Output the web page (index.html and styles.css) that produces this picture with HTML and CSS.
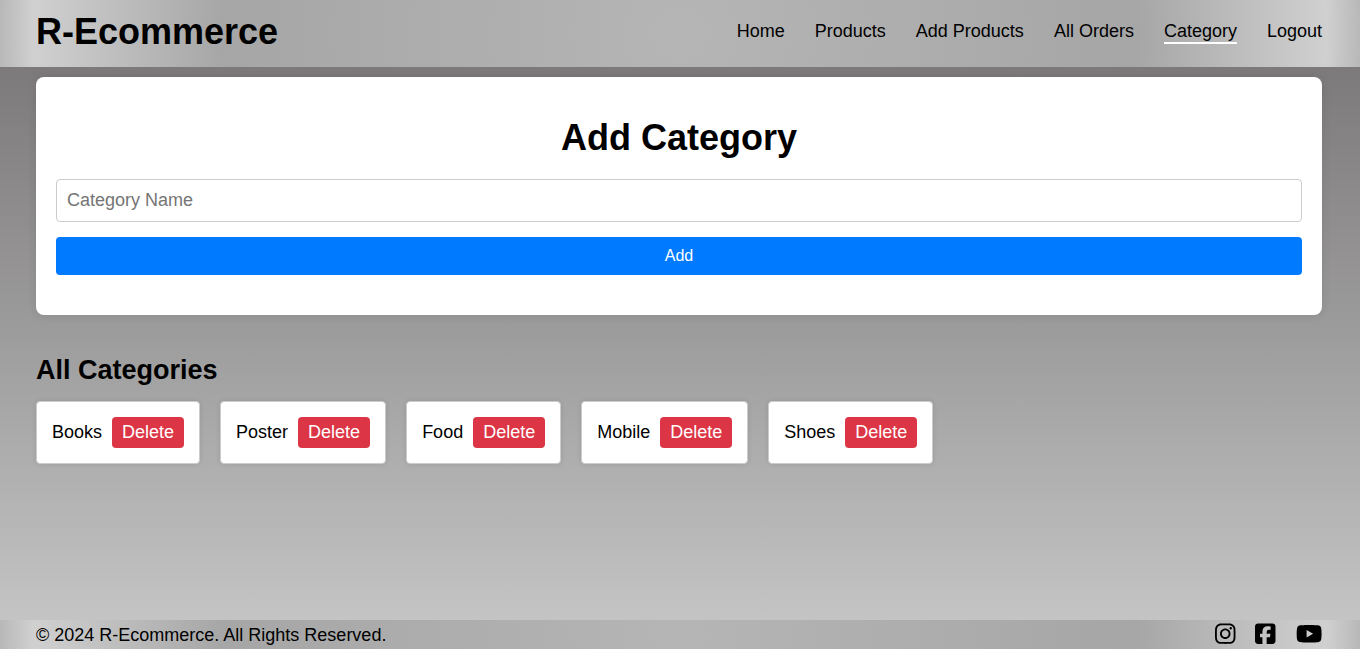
FILE: index.html
```html
<!DOCTYPE html>
<html lang="en">
<head>
<meta charset="utf-8">
<title>R-Ecommerce</title>
<link rel="stylesheet" href="styles.css">
</head>
<body>
<header class="header">
  <div class="logo">R-Ecommerce</div>
  <nav class="nav">
    <a class="nav-link">Home</a>
    <a class="nav-link">Products</a>
    <a class="nav-link">Add Products</a>
    <a class="nav-link">All Orders</a>
    <a class="nav-link active">Category</a>
    <a class="nav-link">Logout</a>
  </nav>
</header>
<main class="main">
  <section class="card">
    <h1 class="title">Add Category</h1>
    <form class="form">
      <input class="input" type="text" placeholder="Category Name">
      <button class="add" type="button">Add</button>
    </form>
  </section>
  <h2 class="subtitle">All Categories</h2>
  <ul class="list">
    <li class="item"><span>Books</span><button class="delete">Delete</button></li>
    <li class="item"><span>Poster</span><button class="delete">Delete</button></li>
    <li class="item"><span>Food</span><button class="delete">Delete</button></li>
    <li class="item"><span>Mobile</span><button class="delete">Delete</button></li>
    <li class="item"><span>Shoes</span><button class="delete">Delete</button></li>
  </ul>
</main>
<footer class="footer">
  <p class="copy">© 2024 R-Ecommerce. All Rights Reserved.</p>
  <div class="social">
    <svg class="icon" viewBox="0 0 448 512"><path d="M224.100 141c-63.600 0-114.900 51.300-114.900 114.900s51.300 114.900 114.900 114.900S339 319.500 339 255.900 287.700 141 224.100 141zm0 189.600c-41.100 0-74.700-33.500-74.700-74.700s33.500-74.700 74.700-74.700 74.700 33.500 74.700 74.700-33.600 74.700-74.700 74.700zm146.400-194.300c0 14.900-12 26.800-26.800 26.800-14.900 0-26.800-12-26.800-26.800s12-26.800 26.800-26.800 26.800 12 26.800 26.800zm76.100 27.200c-1.700-35.900-9.900-67.700-36.200-93.900-26.200-26.200-58-34.400-93.900-36.200-37-2.100-147.900-2.100-184.900 0-35.800 1.700-67.600 9.900-93.900 36.100s-34.400 58-36.200 93.900c-2.100 37-2.100 147.900 0 184.900 1.700 35.900 9.900 67.700 36.200 93.900s58 34.400 93.900 36.200c37 2.100 147.900 2.100 184.900 0 35.900-1.700 67.700-9.900 93.900-36.200 26.200-26.200 34.400-58 36.200-93.900 2.100-37 2.100-147.800 0-184.800zM398.800 388c-7.800 19.600-22.900 34.700-42.600 42.600-29.500 11.700-99.500 9-132.100 9s-102.700 2.600-132.100-9c-19.600-7.800-34.700-22.900-42.600-42.600-11.700-29.500-9-99.500-9-132.100s-2.600-102.700 9-132.100c7.800-19.600 22.900-34.700 42.600-42.600 29.500-11.700 99.500-9 132.100-9s102.700-2.600 132.100 9c19.600 7.800 34.700 22.900 42.600 42.600 11.700 29.500 9 99.500 9 132.100s2.700 102.700-9 132.100z"/></svg>
    <svg class="icon" viewBox="0 0 448 512"><path d="M64 32C28.700 32 0 60.700 0 96V416c0 35.300 28.700 64 64 64h98.200V334.200H109.400V256h52.800V222.300c0-87.100 39.400-127.500 125-127.500c16.200 0 44.200 3.200 55.700 6.400V172c-6-.6-16.500-1-29.600-1c-42 0-58.200 15.900-58.200 57.200V256h83.600l-14.400 78.200H255V480H384c35.300 0 64-28.700 64-64V96c0-35.300-28.700-64-64-64H64z"/></svg>
    <svg class="icon icon-wide" viewBox="0 0 576 512"><path d="M549.700 124.100c-6.300-23.700-24.800-42.300-48.300-48.600C458.800 64 288 64 288 64S117.200 64 74.600 75.500c-23.500 6.300-42 24.900-48.300 48.600-11.400 42.900-11.400 132.300-11.400 132.300s0 89.400 11.400 132.300c6.300 23.700 24.800 41.500 48.300 47.800C117.200 448 288 448 288 448s170.800 0 213.400-11.500c23.500-6.300 42-24.200 48.300-47.800 11.400-42.900 11.400-132.300 11.400-132.300s0-89.400-11.400-132.300zm-317.500 213.500V175.200l142.700 81.200-142.700 81.200z"/></svg>
  </div>
</footer>
</body>
</html>
```
FILE: styles.css
```css
* { box-sizing: border-box; margin: 0; padding: 0; }

body {
  min-height: 100vh;
  display: flex;
  flex-direction: column;
  font-family: "Liberation Sans", Arial, sans-serif;
  font-size: 18px;
  color: #000;
  background: linear-gradient(180deg, #757172 0%, #9c9b9b 50%, #c8c8c8 100%);
}

.header, .footer {
  display: flex;
  justify-content: space-between;
  align-items: center;
  background: radial-gradient(circle, #b5b5b5 0%, #a6a6a6 67%, #d0d0d0 95%, #b8b8b8 100%);
}

.header { height: 67px; padding: 0 38px 5px 36px; }
.logo { font-size: 36px; font-weight: bold; line-height: 41px; }
.nav { display: flex; gap: 30px; }
.nav-link { line-height: 21px; border-bottom: 2px solid transparent; margin-top: 2px; }
.nav-link.active { border-bottom-color: #fff; }

.main { flex: 1; padding: 10px 38px 0 36px; }

.card {
  height: 238px;
  padding: 40px 20px;
  border-radius: 8px;
  background: #fff;
  box-shadow: 0 0 10px rgba(0, 0, 0, 0.1);
}
.title { font-size: 36px; line-height: 41px; text-align: center; margin-bottom: 21px; }
.form { display: flex; flex-direction: column; gap: 15px; }
.input {
  height: 43px;
  padding: 10px;
  border: 1px solid #ccc;
  border-radius: 4px;
  font: inherit;
}
.add {
  height: 38px;
  border: 0;
  border-radius: 4px;
  background: #007bff;
  color: #fff;
  font-family: inherit;
  font-size: 16px;
}

.subtitle { font-size: 27px; line-height: 31px; margin: 40px 0 15px; }
.list { display: flex; gap: 20px; list-style: none; }
.item {
  display: flex;
  align-items: center;
  gap: 10px;
  height: 63px;
  padding: 15px;
  border: 1px solid #ccc;
  border-radius: 4px;
  background: #fff;
  box-shadow: 0 0 5px rgba(0, 0, 0, 0.1);
}
.delete {
  height: 31px;
  padding: 5px 10px;
  border: 0;
  border-radius: 4px;
  background: #dc3545;
  color: #fff;
  font: inherit;
  line-height: 21px;
}

.footer { height: 29px; padding: 0 38px 0 36px; }
.copy { line-height: 21px; padding-top: 2px; }
.social { display: flex; gap: 20px; padding-bottom: 1px; }
.icon { width: 20.5px; height: 23.4px; overflow: visible; }
.icon-wide { width: 26.3px; }
```
